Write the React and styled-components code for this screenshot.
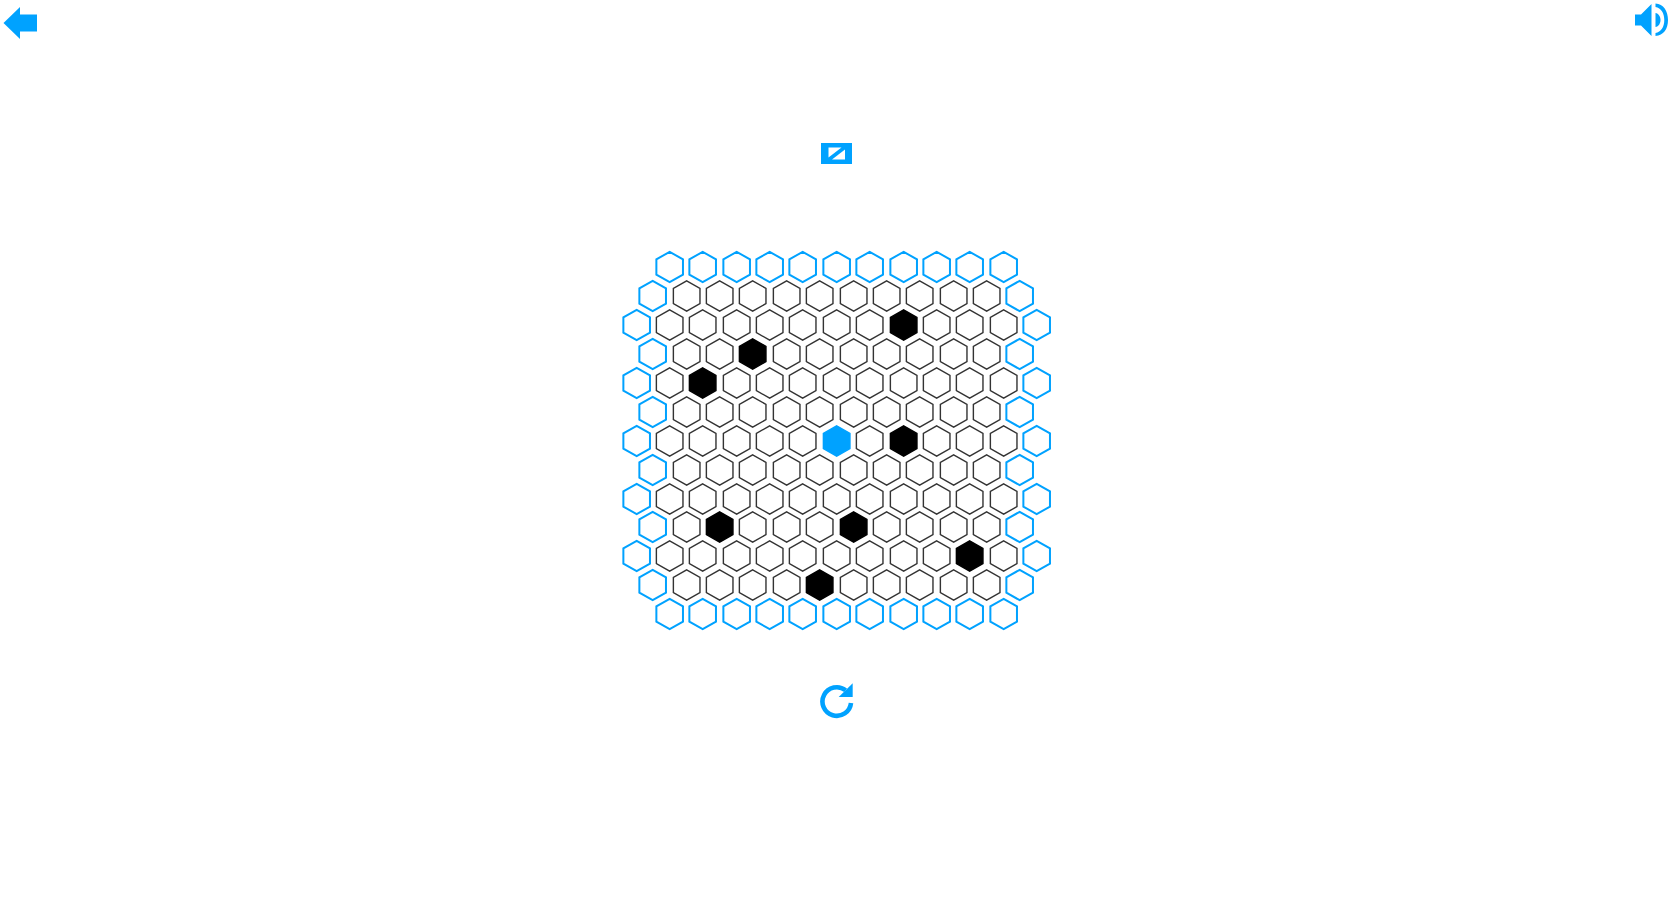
import React from "react";
import styled, { createGlobalStyle } from "styled-components";

const BLUE = "#00a2ff";

const GlobalStyle = createGlobalStyle`
  html, body {
    margin: 0;
    padding: 0;
    height: 100%;
    background: #fff;
    overflow: hidden;
  }
`;

const Page = styled.div`
  display: flex;
  flex-direction: column;
  align-items: center;
  height: 916px;
`;

const TopBar = styled.div`
  display: flex;
  justify-content: space-between;
  width: 100%;
  height: 44px;
`;

const IconButton = styled.button`
  display: block;
  padding: 0;
  border: none;
  background: none;
  cursor: pointer;
  line-height: 0;
`;

const ModeButton = styled(IconButton)`
  margin: 99px 2px 0 0;
`;

const ReloadButton = styled(IconButton)`
  margin: 52px 1px 0 0;
`;

const Board = styled.div`
  display: flex;
  flex-direction: column;
  margin: 89px 1px 0 0;
`;

const BoardRow = styled.div`
  display: flex;
  justify-content: center;
  align-items: center;
  height: 28.9px;
`;

const HexCell = styled.svg`
  flex: none;
  width: 33.35px;
  height: 34px;
  overflow: visible;
  polygon {
    fill: ${(p) => (p.$state === "black" ? "#000" : p.$state === "player" ? BLUE : "#fff")};
    stroke: ${(p) => (p.$edge || p.$state === "player" ? BLUE : p.$state === "black" ? "#000" : "#333")};
    stroke-width: ${(p) => (p.$edge ? 2 : 1.4)};
  }
`;

const HEX_POINTS = "0,-15.2 13.3,-7.6 13.3,7.6 0,15.2 -13.3,7.6 -13.3,-7.6";

const ROW_SIZES = [11, 12, 13, 12, 13, 12, 13, 12, 13, 12, 13, 12, 11];

const BLACK = {
  2: [8],
  3: [3],
  4: [2],
  6: [8],
  9: [2, 6],
  10: [10],
  11: [5],
};

const cellState = (row, col) => {
  if (row === 6 && col === 6) return "player";
  if (BLACK[row] && BLACK[row].includes(col)) return "black";
  return "empty";
};

const isEdge = (row, col, size) =>
  row === 0 || row === ROW_SIZES.length - 1 || col === 0 || col === size - 1;

function BackIcon() {
  return (
    <svg width="44" height="44" viewBox="0 0 44 44">
      <path d="M3.5 23 L20 7 V14.5 H37 V31.5 H20 V39 Z" fill={BLUE} />
    </svg>
  );
}

function SoundIcon() {
  return (
    <svg width="44" height="44" viewBox="0 0 44 44">
      <path d="M5 14.5 H11 L21.5 4 V36 L11 25.5 H5 Z" fill={BLUE} />
      <path d="M25.5 13 C28.5 13.5 30.5 16.5 30.5 20 C30.5 23.5 28.5 26.5 25.5 27 Z" fill={BLUE} />
      <path
        d="M25.5 3.5 C33.5 4 38 11 38 20 C38 29 33.5 35.5 25.5 36 V33 C31 32 34.3 27 34.3 20 C34.3 13 31 8 25.5 7 Z"
        fill={BLUE}
      />
    </svg>
  );
}

function ModeIcon() {
  return (
    <svg width="31" height="21" viewBox="0 0 31 21">
      <rect width="31" height="21" fill={BLUE} />
      <path d="M7.5 4.5 H20.5 L7.5 14.5 Z" fill="#fff" />
      <path d="M24 6.5 V16.5 H11 Z" fill="#fff" />
    </svg>
  );
}

function ReloadIcon() {
  return (
    <svg width="36" height="40" viewBox="0 0 36 40">
      <path
        d="M26.6 9.3 A14.3 14.3 0 1 0 32 22"
        fill="none"
        stroke={BLUE}
        strokeWidth="4.6"
      />
      <path d="M19.7 16 H33.7 V2.3 Z" fill={BLUE} />
    </svg>
  );
}

export default function App() {
  return (
    <Page>
      <GlobalStyle />
      <TopBar>
        <IconButton>
          <BackIcon />
        </IconButton>
        <IconButton>
          <SoundIcon />
        </IconButton>
      </TopBar>
      <ModeButton>
        <ModeIcon />
      </ModeButton>
      <Board>
        {ROW_SIZES.map((size, row) => (
          <BoardRow key={row}>
            {Array.from({ length: size }, (_, col) => (
              <HexCell
                key={col}
                viewBox="-16.675 -17 33.35 34"
                $edge={isEdge(row, col, size)}
                $state={cellState(row, col)}
              >
                <polygon points={HEX_POINTS} />
              </HexCell>
            ))}
          </BoardRow>
        ))}
      </Board>
      <ReloadButton>
        <ReloadIcon />
      </ReloadButton>
    </Page>
  );
}
